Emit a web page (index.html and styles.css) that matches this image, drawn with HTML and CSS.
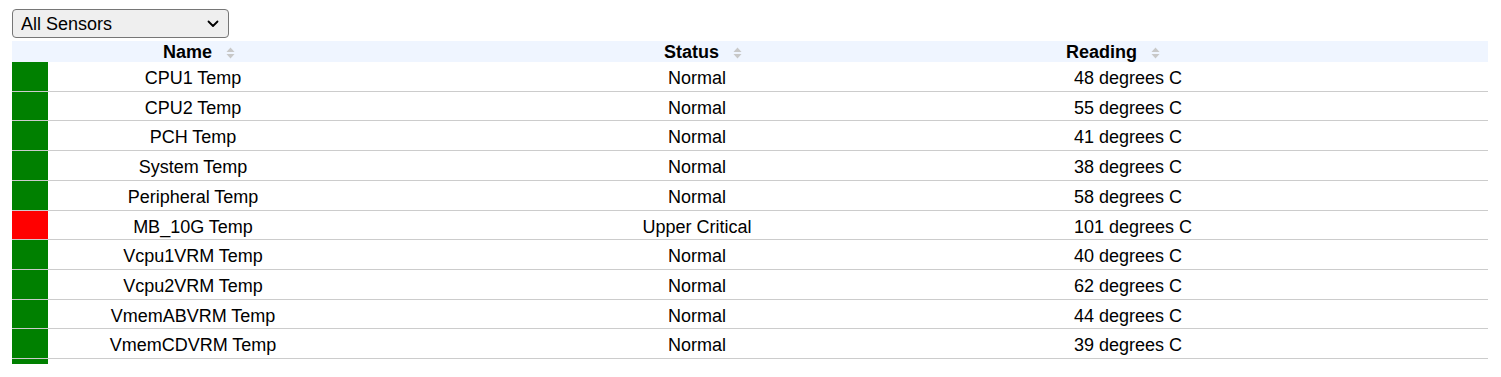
FILE: index.html
```html
<!DOCTYPE html>
<html>
<head>
<meta charset="utf-8">
<link rel="stylesheet" href="styles.css">
</head>
<body>
<div class="page">
  <div class="select-wrap">
    <select class="filter">
      <option>All Sensors</option>
      <option>Temperature</option>
      <option>Voltage</option>
      <option>Fan</option>
    </select>
    <svg class="chev" width="12" height="8" viewBox="0 0 12 8"><path d="M1.5 1.5 L6 6 L10.5 1.5" fill="none" stroke="#000" stroke-width="1.8" stroke-linecap="round" stroke-linejoin="round"/></svg>
  </div>
  <div class="scroller">
    <div class="grid">
      <div class="row head">
        <div class="cell"></div>
        <div class="cell h-center">Name<svg class="sort" width="9" height="12" viewBox="0 0 9 12"><path d="M4.5 0.5 L8.5 5 L0.5 5 Z" fill="#c8c8c8"/><path d="M4.5 11.5 L8.5 7 L0.5 7 Z" fill="#c8c8c8"/></svg></div>
        <div class="cell h-center">Status<svg class="sort" width="9" height="12" viewBox="0 0 9 12"><path d="M4.5 0.5 L8.5 5 L0.5 5 Z" fill="#c8c8c8"/><path d="M4.5 11.5 L8.5 7 L0.5 7 Z" fill="#c8c8c8"/></svg></div>
        <div class="cell h-read">Reading<svg class="sort" width="9" height="12" viewBox="0 0 9 12"><path d="M4.5 0.5 L8.5 5 L0.5 5 Z" fill="#c8c8c8"/><path d="M4.5 11.5 L8.5 7 L0.5 7 Z" fill="#c8c8c8"/></svg></div>
      </div>
      <div class="row"><div class="ind ok"></div><div class="cell name">CPU1 Temp</div><div class="cell status">Normal</div><div class="cell read">48 degrees C</div></div>
      <div class="row"><div class="ind ok"></div><div class="cell name">CPU2 Temp</div><div class="cell status">Normal</div><div class="cell read">55 degrees C</div></div>
      <div class="row"><div class="ind ok"></div><div class="cell name">PCH Temp</div><div class="cell status">Normal</div><div class="cell read">41 degrees C</div></div>
      <div class="row"><div class="ind ok"></div><div class="cell name">System Temp</div><div class="cell status">Normal</div><div class="cell read">38 degrees C</div></div>
      <div class="row"><div class="ind ok"></div><div class="cell name">Peripheral Temp</div><div class="cell status">Normal</div><div class="cell read">58 degrees C</div></div>
      <div class="row"><div class="ind crit"></div><div class="cell name">MB_10G Temp</div><div class="cell status">Upper Critical</div><div class="cell read">101 degrees C</div></div>
      <div class="row"><div class="ind ok"></div><div class="cell name">Vcpu1VRM Temp</div><div class="cell status">Normal</div><div class="cell read">40 degrees C</div></div>
      <div class="row"><div class="ind ok"></div><div class="cell name">Vcpu2VRM Temp</div><div class="cell status">Normal</div><div class="cell read">62 degrees C</div></div>
      <div class="row"><div class="ind ok"></div><div class="cell name">VmemABVRM Temp</div><div class="cell status">Normal</div><div class="cell read">44 degrees C</div></div>
      <div class="row"><div class="ind ok"></div><div class="cell name">VmemCDVRM Temp</div><div class="cell status">Normal</div><div class="cell read">39 degrees C</div></div>
      <div class="row"><div class="ind ok"></div><div class="cell name">VmemEFVRM Temp</div><div class="cell status">Normal</div><div class="cell read">42 degrees C</div></div>
    </div>
  </div>
</div>
</body>
</html>
```
FILE: styles.css
```css
html, body {
  margin: 0;
  padding: 0;
  background: #fff;
}
body {
  font-family: "Liberation Sans", Arial, sans-serif;
  font-size: 18px;
  color: #000;
}
.page {
  padding: 9px 13px 0 12px;
}
.select-wrap {
  position: relative;
  width: 217px;
  height: 29px;
}
.filter {
  appearance: none;
  -webkit-appearance: none;
  width: 217px;
  height: 29px;
  box-sizing: border-box;
  border: 1px solid #767676;
  border-radius: 4px;
  background: #efefef;
  font-family: "Liberation Sans", Arial, sans-serif;
  font-size: 18px;
  color: #000;
  padding: 0 0 0 8px;
  margin: 0;
  display: block;
}
.chev {
  position: absolute;
  left: 195px;
  top: 11px;
  pointer-events: none;
}
.scroller {
  margin-top: 3px;
  height: 323px;
  overflow: hidden;
}
.grid {
  width: 1476px;
}
.row {
  display: grid;
  grid-template-columns: 36px 290px 718px 1fr;
  border-bottom: 1px solid #cccccc;
}
.row.head {
  background: #eff5ff;
  border-bottom: none;
  font-weight: bold;
}
.cell {
  white-space: nowrap;
}
.row.head .cell {
  line-height: 19px;
  padding-top: 2px;
}
.row:not(.head) .cell {
  line-height: 20.7px;
  padding-top: 6px;
  padding-bottom: 2px;
}
.h-center {
  text-align: center;
  padding-left: 12px;
}
.h-read {
  text-align: left;
  padding-left: 10px;
}
.sort {
  margin-left: 14px;
  vertical-align: -1px;
}
.ind.ok { background: #008000; }
.ind.crit { background: #ff0000; }
.name, .status {
  text-align: center;
}
.row .read {
  text-align: left;
  padding-left: 18px;
}
```
